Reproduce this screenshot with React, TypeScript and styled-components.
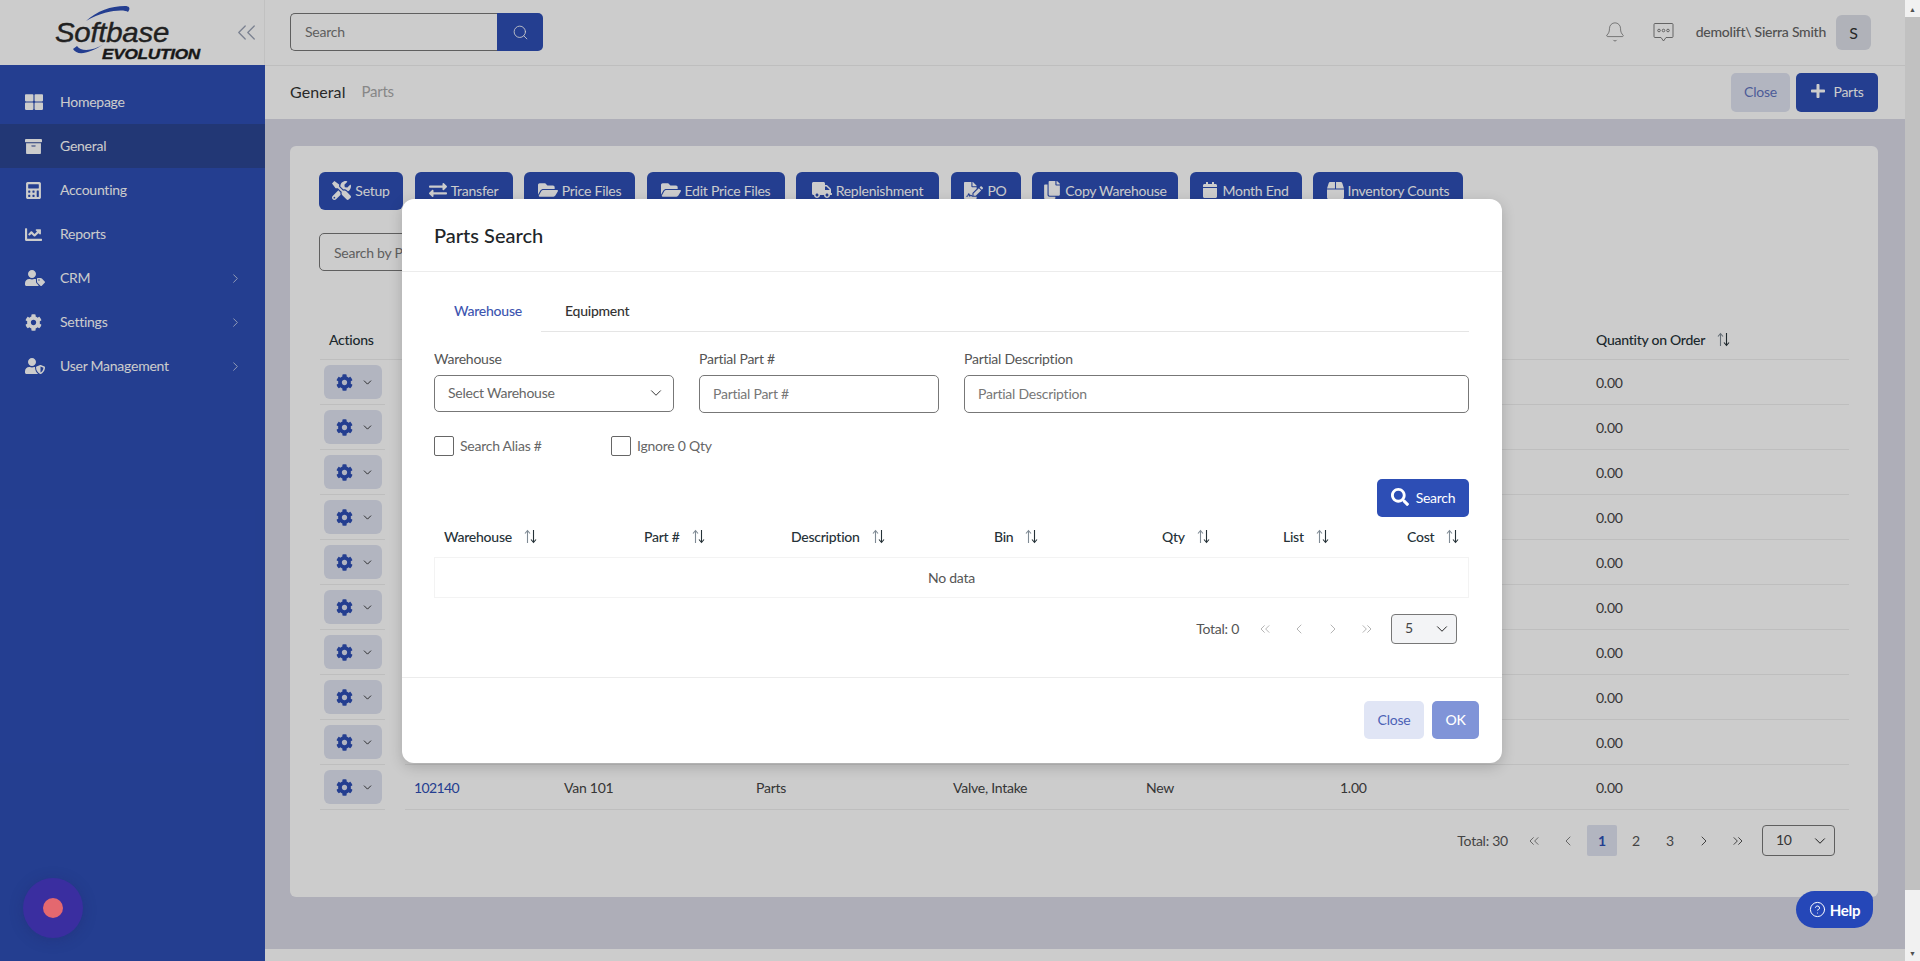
import styled, { createGlobalStyle } from 'styled-components';
import {
  FaArchive,
  FaBox,
  FaCalculator,
  FaCalendar,
  FaChartLine,
  FaCog,
  FaCopy,
  FaExchangeAlt,
  FaFileSignature,
  FaFolderOpen,
  FaPlus,
  FaSearch,
  FaThLarge,
  FaTools,
  FaTruck,
  FaUserShield,
  FaUserTag,
} from 'react-icons/fa';
import {
  Bell,
  ChevronDown,
  ChevronLeft,
  ChevronRight,
  ChevronsLeft,
  ChevronsRight,
  CircleHelp,
  Search as SearchIcon,
} from 'lucide-react';

const FONT = 'Lato, "Noto Sans", sans-serif';
const PRIMARY = '#2d4eb5';

const navItems = [
  { label: 'Homepage', icon: <FaThLarge size={18} /> },
  { label: 'General', icon: <FaArchive size={17} />, active: true },
  { label: 'Accounting', icon: <FaCalculator size={17} /> },
  { label: 'Reports', icon: <FaChartLine size={17} /> },
  { label: 'CRM', icon: <FaUserTag size={20} />, more: true },
  { label: 'Settings', icon: <FaCog size={17} />, more: true },
  { label: 'User Management', icon: <FaUserShield size={20} />, more: true },
];

const toolButtons = [
  { label: 'Setup', icon: <FaTools size={19} />, width: 84 },
  { label: 'Transfer', icon: <FaExchangeAlt size={18} />, width: 98 },
  { label: 'Price Files', icon: <FaFolderOpen size={20} />, width: 111 },
  { label: 'Edit Price Files', icon: <FaFolderOpen size={20} />, width: 138 },
  { label: 'Replenishment', icon: <FaTruck size={20} />, width: 143 },
  { label: 'PO', icon: <FaFileSignature size={19} />, width: 70 },
  { label: 'Copy Warehouse', icon: <FaCopy size={18} />, width: 146 },
  { label: 'Month End', icon: <FaCalendar size={16} />, width: 112 },
  { label: 'Inventory Counts', icon: <FaBox size={17} />, width: 150 },
];

const rows = Array.from({ length: 10 }, (_, i) =>
  i === 9
    ? { part: '102140', warehouse: 'Van 101', type: 'Parts', description: 'Valve, Intake', condition: 'New', qty: '1.00', onOrder: '0.00' }
    : { part: '', warehouse: '', type: '', description: '', condition: '', qty: '', onOrder: '0.00' },
);

const modalColumns = ['Warehouse', 'Part #', 'Description', 'Bin', 'Qty', 'List', 'Cost'];

const SortIcon = () => (
  <svg width="13" height="15" viewBox="0 0 13 15" fill="none" strokeWidth="1.1">
    <path d="M3.5 14V2M1 4.5L3.5 1.5L6 4.5" stroke="#7f8a94" />
    <path d="M9.5 1V13M7 10.5L9.5 13.5L12 10.5" stroke="#263238" />
  </svg>
);

const ChatIcon = () => (
  <svg width="21" height="21" viewBox="0 0 21 21" fill="none" stroke="#6f6f6f" strokeWidth="0.9">
    <path d="M2 1.5H19A1 1 0 0 1 20 2.5V14.5A1 1 0 0 1 19 15.5H13L10.5 19L8 15.5H2A1 1 0 0 1 1 14.5V2.5A1 1 0 0 1 2 1.5Z" />
    <circle cx="6" cy="8.5" r="1.3" />
    <circle cx="10.5" cy="8.5" r="1.3" />
    <circle cx="15" cy="8.5" r="1.3" />
  </svg>
);

const Logo = () => (
  <svg width="150" height="62" viewBox="0 0 150 62">
    <path d="M31 19C42 9 56 4 70 4C74 4 76 6 73 10C69 7 50 8 31 19Z" fill="#2d4eb5" />
    <path d="M18 47C22 54 34 52 49 42C38 49 26 50 22 44Z" fill="#2d4eb5" />
    <text x="0" y="40" fontFamily="Liberation Sans" fontStyle="italic" fontSize="28" fill="#2a2a2a" stroke="#2a2a2a" strokeWidth="0.4" textLength="114" lengthAdjust="spacingAndGlyphs">
      Softbase
    </text>
    <text x="47" y="57" fontFamily="Liberation Sans" fontStyle="italic" fontWeight="700" fontSize="15.5" fill="#1e1e1e" stroke="#1e1e1e" strokeWidth="0.4" textLength="98" lengthAdjust="spacingAndGlyphs">
      EVOLUTION
    </text>
  </svg>
);

const App = () => {
  return (
    <Page>
      <GlobalStyle />
      <Shell>
        <Sidebar>
          <LogoBar>
            <LogoBox>
              <Logo />
            </LogoBox>
            <CollapseBtn>
              <ChevronsLeft size={31} strokeWidth={1} />
            </CollapseBtn>
          </LogoBar>
          <Nav>
            {navItems.map((item) => (
              <NavItem key={item.label} $active={item.active}>
                <NavIcon>{item.icon}</NavIcon>
                <NavLabel>{item.label}</NavLabel>
                {item.more && <ChevronRight size={15} strokeWidth={1.5} opacity={0.7} />}
              </NavItem>
            ))}
          </Nav>
        </Sidebar>

        <Content>
          <TopBar>
            <TopSearch>
              <TopSearchInput placeholder="Search" readOnly />
              <TopSearchBtn>
                <SearchIcon size={17} strokeWidth={1.2} />
              </TopSearchBtn>
            </TopSearch>
            <TopRight>
              <Bell size={22} strokeWidth={0.8} color="#6f6f6f" />
              <ChatSlot>
                <ChatIcon />
              </ChatSlot>
              <UserName>demolift\ Sierra Smith</UserName>
              <Avatar>S</Avatar>
            </TopRight>
          </TopBar>

          <SubBar>
            <Crumb>General</Crumb>
            <CrumbSub>Parts</CrumbSub>
            <SubActions>
              <SoftBtn $dimmed>Close</SoftBtn>
              <AddBtn>
                <FaPlus size={16} />
                Parts
              </AddBtn>
            </SubActions>
          </SubBar>

          <Main>
            <Card>
              <Toolbar>
                {toolButtons.map((b) => (
                  <ToolBtn key={b.label} $w={b.width}>
                    {b.icon}
                    {b.label}
                  </ToolBtn>
                ))}
              </Toolbar>
              <PartSearch placeholder="Search by Part" readOnly />

              <GridHead>
                <HeadCell>Actions</HeadCell>
                <HeadCell />
                <HeadCell />
                <HeadCell />
                <HeadCell />
                <HeadCell />
                <HeadCell />
                <HeadCell>
                  Quantity on Order
                  <SortIcon />
                </HeadCell>
              </GridHead>
              {rows.map((r, i) => (
                <GridRow key={i}>
                  <ActionCell>
                    <ActionBtn>
                      <FaCog size={17} color={PRIMARY} />
                      <ChevronDown size={13} strokeWidth={1.6} color="#222" />
                    </ActionBtn>
                  </ActionCell>
                  <PartLink>{r.part}</PartLink>
                  <Cell>{r.warehouse}</Cell>
                  <Cell>{r.type}</Cell>
                  <Cell>{r.description}</Cell>
                  <Cell>{r.condition}</Cell>
                  <Cell>{r.qty}</Cell>
                  <Cell>{r.onOrder}</Cell>
                </GridRow>
              ))}

              <Pager $top={15} $right={14}>
                <PagerTotal>Total: 30</PagerTotal>
                <PageArrow><ChevronsLeft size={16} strokeWidth={1.1} /></PageArrow>
                <PageArrow><ChevronLeft size={16} strokeWidth={1.1} /></PageArrow>
                <PageNum $active>1</PageNum>
                <PageNum>2</PageNum>
                <PageNum>3</PageNum>
                <PageArrow><ChevronRight size={16} strokeWidth={1.5} /></PageArrow>
                <PageArrow><ChevronsRight size={16} strokeWidth={1.5} /></PageArrow>
                <PageSize $w={73} $h={31}>
                  <PageSizeValue>10</PageSizeValue>
                  <ChevronDown size={18} strokeWidth={1.3} color="#222" />
                </PageSize>
              </Pager>
            </Card>
          </Main>
          <BottomStrip />
        </Content>

        <Overlay>
          <Modal>
            <ModalHeader>Parts Search</ModalHeader>
            <ModalBody>
              <Tabs>
                <Tab $active>Warehouse</Tab>
                <Tab>Equipment</Tab>
              </Tabs>
              <FieldRow>
                <Field>
                  <FieldLabel>Warehouse</FieldLabel>
                  <Select>
                    Select Warehouse
                    <ChevronDown size={18} strokeWidth={1.3} color="#333" />
                  </Select>
                </Field>
                <Field>
                  <FieldLabel>Partial Part #</FieldLabel>
                  <TextInput placeholder="Partial Part #" readOnly />
                </Field>
                <Field>
                  <FieldLabel>Partial Description</FieldLabel>
                  <TextInput placeholder="Partial Description" readOnly />
                </Field>
              </FieldRow>
              <CheckRow>
                <CheckLabel>
                  <CheckBox />
                  <CheckText>Search Alias #</CheckText>
                </CheckLabel>
                <CheckLabel>
                  <CheckBox />
                  <CheckText>Ignore 0 Qty</CheckText>
                </CheckLabel>
              </CheckRow>
              <SearchRow>
                <SearchBtn>
                  <FaSearch size={18} />
                  Search
                </SearchBtn>
              </SearchRow>
              <MiniHead>
                {modalColumns.map((c) => (
                  <MiniHeadCell key={c}>
                    {c}
                    <SortIcon />
                  </MiniHeadCell>
                ))}
              </MiniHead>
              <NoData>No data</NoData>
              <Pager $top={16} $right={12}>
                <PagerTotal>Total: 0</PagerTotal>
                <PageArrow $dim><ChevronsLeft size={16} strokeWidth={1.1} /></PageArrow>
                <PageArrow $dim><ChevronLeft size={16} strokeWidth={1.1} /></PageArrow>
                <PageArrow $dim><ChevronRight size={16} strokeWidth={1.1} /></PageArrow>
                <PageArrow $dim><ChevronsRight size={16} strokeWidth={1.1} /></PageArrow>
                <PageSize $w={66} $h={30} $fill>
                  <PageSizeValue>5</PageSizeValue>
                  <ChevronDown size={18} strokeWidth={1.3} color="#222" />
                </PageSize>
              </Pager>
            </ModalBody>
            <ModalFooter>
              <SoftBtn>Close</SoftBtn>
              <OkBtn>OK</OkBtn>
            </ModalFooter>
          </Modal>
        </Overlay>

        <Recorder>
          <RecorderDot />
        </Recorder>
        <HelpBtn>
          <CircleHelp size={17} strokeWidth={1.4} />
          Help
        </HelpBtn>
      </Shell>
      <Scrollbar>
        <ScrollArrow>▲</ScrollArrow>
        <ScrollThumb />
        <ScrollTrack />
        <ScrollArrow>▼</ScrollArrow>
      </Scrollbar>
    </Page>
  );
};

export default App;

const GlobalStyle = createGlobalStyle`
  html, body {
    margin: 0;
    padding: 0;
    overflow: hidden;
  }
  * {
    box-sizing: border-box;
  }
  input::placeholder {
    color: #777;
  }
  input, button {
    letter-spacing: inherit;
  }
`;

const Page = styled.div`
  width: 1920px;
  height: 961px;
  display: flex;
  font-family: ${FONT};
  font-size: 14px;
  letter-spacing: -0.25px;
  color: #333;
  overflow: hidden;
`;

const Shell = styled.div`
  position: relative;
  flex: 1;
  display: flex;
  min-width: 0;
  background: #fff;
`;

const Sidebar = styled.aside`
  width: 265px;
  flex-shrink: 0;
  display: flex;
  flex-direction: column;
  background: ${PRIMARY};
`;

const LogoBar = styled.div`
  height: 65px;
  background: #fff;
  display: flex;
  align-items: center;
  padding: 0 2px 0 55px;
  justify-content: space-between;
  border-right: 1px solid #f2f2f2;
`;

const LogoBox = styled.div`
  display: flex;
  height: 62px;
`;

const CollapseBtn = styled.div`
  display: flex;
  color: #9aa2b5;
`;

const Nav = styled.nav`
  padding-top: 15px;
`;

const NavItem = styled.div<{ $active?: boolean }>`
  height: 44px;
  display: flex;
  align-items: center;
  padding: 0 22px 0 25px;
  color: #fff;
  background: ${(p) => (p.$active ? '#2b4593' : 'transparent')};
`;

const NavIcon = styled.span`
  width: 35px;
  display: flex;
`;

const NavLabel = styled.span`
  flex: 1;
  padding-bottom: 2px;
`;

const Content = styled.div`
  flex: 1;
  min-width: 0;
  display: flex;
  flex-direction: column;
`;

const TopBar = styled.header`
  height: 66px;
  border-bottom: 1px solid #eee;
  display: flex;
  align-items: center;
  justify-content: space-between;
  padding: 0 34px 0 25px;
`;

const TopSearch = styled.div`
  display: flex;
  width: 253px;
  height: 38px;
`;

const TopSearchInput = styled.input`
  flex: 1;
  min-width: 0;
  border: 1px solid #777;
  border-right: 0;
  border-radius: 5px 0 0 5px;
  padding: 0 14px 2px;
  font: inherit;
  outline: none;
`;

const TopSearchBtn = styled.div`
  width: 46px;
  display: flex;
  align-items: center;
  justify-content: center;
  background: ${PRIMARY};
  color: #fff;
  border-radius: 0 5px 5px 0;
`;

const TopRight = styled.div`
  display: flex;
  align-items: center;
`;

const ChatSlot = styled.span`
  display: flex;
  margin-left: 27px;
`;

const UserName = styled.span`
  margin-left: 22px;
  margin-right: 10px;
  padding-bottom: 2px;
  font-weight: 500;
  color: #666;
`;

const Avatar = styled.div`
  width: 35px;
  height: 35px;
  border-radius: 6px;
  background: #dcdfe8;
  display: flex;
  align-items: center;
  justify-content: center;
  font-size: 16px;
  color: #333;
`;

const SubBar = styled.div`
  height: 54px;
  display: flex;
  align-items: center;
  padding: 0 27px 0 25px;
  background: #fff;
`;

const Crumb = styled.span`
  padding-bottom: 2px;
  font-size: 16px;
  letter-spacing: 0.1px;
  color: #333;
`;

const CrumbSub = styled.span`
  margin-left: 16px;
  padding-bottom: 2px;
  font-size: 15px;
  color: #a9a9a9;
`;

const SubActions = styled.div`
  margin-left: auto;
  display: flex;
  gap: 6px;
`;

const SoftBtn = styled.button<{ $dimmed?: boolean }>`
  width: ${(p) => (p.$dimmed ? 59 : 60)}px;
  height: ${(p) => (p.$dimmed ? 39 : 38)}px;
  padding: 0 0 2px;
  border: 0;
  border-radius: 5px;
  font: inherit;
  color: ${(p) => (p.$dimmed ? '#5f73be' : '#4c62b5')};
  background: ${(p) => (p.$dimmed ? '#dfe3f1' : '#e0e5f5')};
`;

const AddBtn = styled.button`
  height: 39px;
  width: 82px;
  display: flex;
  align-items: center;
  justify-content: center;
  gap: 7px;
  padding: 0 0 2px;
  border: 0;
  border-radius: 5px;
  font: inherit;
  color: #fff;
  background: ${PRIMARY};
`;

const Main = styled.main`
  flex: 1;
  background: #dadae6;
  padding: 27px 27px 52px 25px;
`;

const BottomStrip = styled.div`
  height: 12px;
  background: #fff;
`;

const Card = styled.section`
  height: 751px;
  background: #fff;
  border-radius: 6px;
  padding: 26px 29px;
`;

const Toolbar = styled.div`
  display: flex;
  gap: 11.5px;
`;

const ToolBtn = styled.button<{ $w: number }>`
  width: ${(p) => p.$w}px;
  height: 38px;
  display: flex;
  align-items: center;
  justify-content: center;
  gap: 4px;
  padding: 0 0 2px;
  border: 0;
  border-radius: 6px;
  font: inherit;
  color: #fff;
  background: ${PRIMARY};
`;

const PartSearch = styled.input`
  display: block;
  margin-top: 23px;
  width: 260px;
  height: 38px;
  padding: 0 14px;
  border: 1px solid #777;
  border-radius: 5px;
  font: inherit;
  outline: none;
`;

const GridHead = styled.div`
  display: grid;
  grid-template-columns: 85px 150px 192px 197px 193px 194px 256px 262px;
  margin-top: 48px;
  margin-left: 1px;
  height: 41px;
  border-bottom: 1px solid #eee;
`;

const HeadCell = styled.div`
  display: flex;
  align-items: center;
  gap: 12px;
  padding-left: 9px;
  font-weight: 500;
  color: #263238;
`;

const GridRow = styled.div`
  display: grid;
  grid-template-columns: 85px 150px 192px 197px 193px 194px 256px 262px;
  margin-left: 1px;
  height: 45px;
`;

const ActionCell = styled.div`
  margin-right: 20px;
  padding: 5px 0 0 4px;
  border-bottom: 1px solid #eee;
`;

const ActionBtn = styled.div`
  width: 58px;
  height: 34px;
  display: flex;
  align-items: center;
  gap: 8px;
  padding-left: 12px;
  background: #dfe3f1;
  border-radius: 6px;
`;

const Cell = styled.div`
  display: flex;
  align-items: center;
  padding-left: 9px;
  border-bottom: 1px solid #eee;
  color: #444;
`;

const PartLink = styled(Cell)`
  letter-spacing: -0.6px;
  color: ${PRIMARY};
`;

const Pager = styled.div<{ $top: number; $right: number }>`
  display: flex;
  align-items: center;
  justify-content: flex-end;
  margin-top: ${(p) => p.$top}px;
  padding-right: ${(p) => p.$right}px;
`;

const PagerTotal = styled.span`
  margin-right: 9px;
  padding-bottom: 1px;
  color: #555;
`;

const PageArrow = styled.span<{ $dim?: boolean }>`
  width: 34px;
  display: flex;
  justify-content: center;
  color: ${(p) => (p.$dim ? '#9a9a9a' : '#555')};
`;

const PageNum = styled.span<{ $active?: boolean }>`
  width: 30px;
  height: 31px;
  margin: 0 2px;
  display: flex;
  align-items: center;
  justify-content: center;
  border-radius: 2px;
  color: ${(p) => (p.$active ? PRIMARY : '#555')};
  font-weight: ${(p) => (p.$active ? 700 : 400)};
  background: ${(p) => (p.$active ? '#dfe3f1' : 'transparent')};
`;

const PageSize = styled.div<{ $w: number; $h: number; $fill?: boolean }>`
  width: ${(p) => p.$w}px;
  height: ${(p) => p.$h}px;
  margin-left: 7px;
  display: flex;
  align-items: center;
  justify-content: space-between;
  padding: 0 5px 0 13px;
  border: 1px solid #777;
  border-radius: 4px;
  color: #444;
  background: ${(p) => (p.$fill ? '#f3f4f6' : 'transparent')};
`;

const PageSizeValue = styled.span`
  margin-bottom: 3px;
`;

const Overlay = styled.div`
  position: absolute;
  inset: 0;
  z-index: 5;
  background: rgba(0, 0, 0, 0.2);
`;

const Modal = styled.div`
  width: 1100px;
  height: 564px;
  margin: 199px 0 0 402px;
  display: flex;
  flex-direction: column;
  background: #fff;
  border-radius: 12px;
  box-shadow: 0 4px 14px rgba(0, 0, 0, 0.18);
`;

const ModalHeader = styled.div`
  height: 73px;
  display: flex;
  align-items: center;
  padding-left: 32px;
  font-size: 20px;
  font-weight: 500;
  letter-spacing: 0;
  color: #212529;
  border-bottom: 1px solid #ececec;
`;

const ModalBody = styled.div`
  height: 406px;
  padding: 20px 33px 0 32px;
  border-bottom: 1px solid #ececec;
`;

const Tabs = styled.div`
  display: flex;
  height: 40px;
`;

const Tab = styled.div<{ $active?: boolean }>`
  display: flex;
  align-items: center;
  flex: ${(p) => (p.$active ? '0 0 107px' : '1')};
  padding: 0 0 3px ${(p) => (p.$active ? '20px' : '24px')};
  font-weight: 500;
  color: ${(p) => (p.$active ? '#3d55b0' : '#333')};
  border-bottom: ${(p) => (p.$active ? '0' : '1px solid #e5e5e5')};
`;

const FieldRow = styled.div`
  display: grid;
  grid-template-columns: 240px 240px 505px;
  gap: 25px;
  margin-top: 17px;
`;

const Field = styled.div`
  display: flex;
  flex-direction: column;
`;

const FieldLabel = styled.label`
  line-height: 20px;
  margin-bottom: 6px;
  color: #555;
`;

const Select = styled.div`
  height: 37px;
  display: flex;
  align-items: center;
  justify-content: space-between;
  padding: 0 8px 2px 13px;
  border: 1px solid #777;
  border-radius: 5px;
  color: #666;
`;

const TextInput = styled.input`
  height: 38px;
  padding: 0 13px 2px;
  border: 1px solid #777;
  border-radius: 5px;
  font: inherit;
  outline: none;
`;

const CheckRow = styled.div`
  display: flex;
  gap: 45px;
  margin-top: 23px;
`;

const CheckLabel = styled.label`
  display: flex;
  align-items: center;
  gap: 6px;
  height: 20px;
  min-width: 132px;
  color: #666;
`;

const CheckText = styled.span`
  padding-bottom: 2px;
`;

const CheckBox = styled.span`
  width: 20px;
  height: 20px;
  border: 1px solid #666;
  border-radius: 2px;
`;

const SearchRow = styled.div`
  display: flex;
  justify-content: flex-end;
  margin-top: 23px;
`;

const SearchBtn = styled.button`
  width: 92px;
  height: 38px;
  display: flex;
  align-items: center;
  justify-content: center;
  gap: 7px;
  padding: 0 0 2px;
  border: 0;
  border-radius: 5px;
  font: inherit;
  color: #fff;
  background: ${PRIMARY};
`;

const MiniHead = styled.div`
  display: grid;
  grid-template-columns: 200px 147px 203px 168px 121px 124px 72px;
  height: 40px;
  padding-bottom: 2px;
`;

const MiniHeadCell = styled.div`
  display: flex;
  align-items: center;
  gap: 12px;
  padding-left: 10px;
  font-weight: 500;
  color: #263238;
`;

const NoData = styled.div`
  height: 41px;
  display: flex;
  align-items: center;
  justify-content: center;
  border: 1px solid #f3f3f3;
  color: #555;
`;

const ModalFooter = styled.div`
  display: flex;
  justify-content: flex-end;
  gap: 8px;
  padding: 23px 23px 0 0;
`;

const OkBtn = styled.button`
  width: 47px;
  height: 38px;
  padding: 0 0 2px;
  border: 0;
  border-radius: 5px;
  font: inherit;
  font-weight: 500;
  color: #fff;
  background: #8094d8;
`;

const Recorder = styled.div`
  position: absolute;
  left: 23px;
  top: 878px;
  z-index: 10;
  width: 60px;
  height: 60px;
  display: flex;
  align-items: center;
  justify-content: center;
  border-radius: 50%;
  background: #3a2ea0;
  box-shadow: 0 2px 14px rgba(30, 30, 90, 0.25);
`;

const RecorderDot = styled.div`
  width: 20px;
  height: 20px;
  border-radius: 50%;
  background: #e4686f;
`;

const HelpBtn = styled.div`
  position: absolute;
  left: 1796px;
  top: 891px;
  z-index: 10;
  width: 77px;
  height: 37px;
  display: flex;
  align-items: center;
  justify-content: center;
  gap: 4px;
  border-radius: 20px 10px 20px 20px;
  font-size: 15px;
  font-weight: 700;
  color: #fff;
  background: #2547b8;
`;

const Scrollbar = styled.div`
  width: 15px;
  flex-shrink: 0;
  display: flex;
  flex-direction: column;
  background: #f1f1f1;
`;

const ScrollArrow = styled.div`
  height: 17px;
  display: flex;
  align-items: center;
  justify-content: center;
  font-size: 7px;
  letter-spacing: 0;
  color: #505050;
`;

const ScrollThumb = styled.div`
  height: 873px;
  background: #c1c1c1;
`;

const ScrollTrack = styled.div`
  flex: 1;
`;
